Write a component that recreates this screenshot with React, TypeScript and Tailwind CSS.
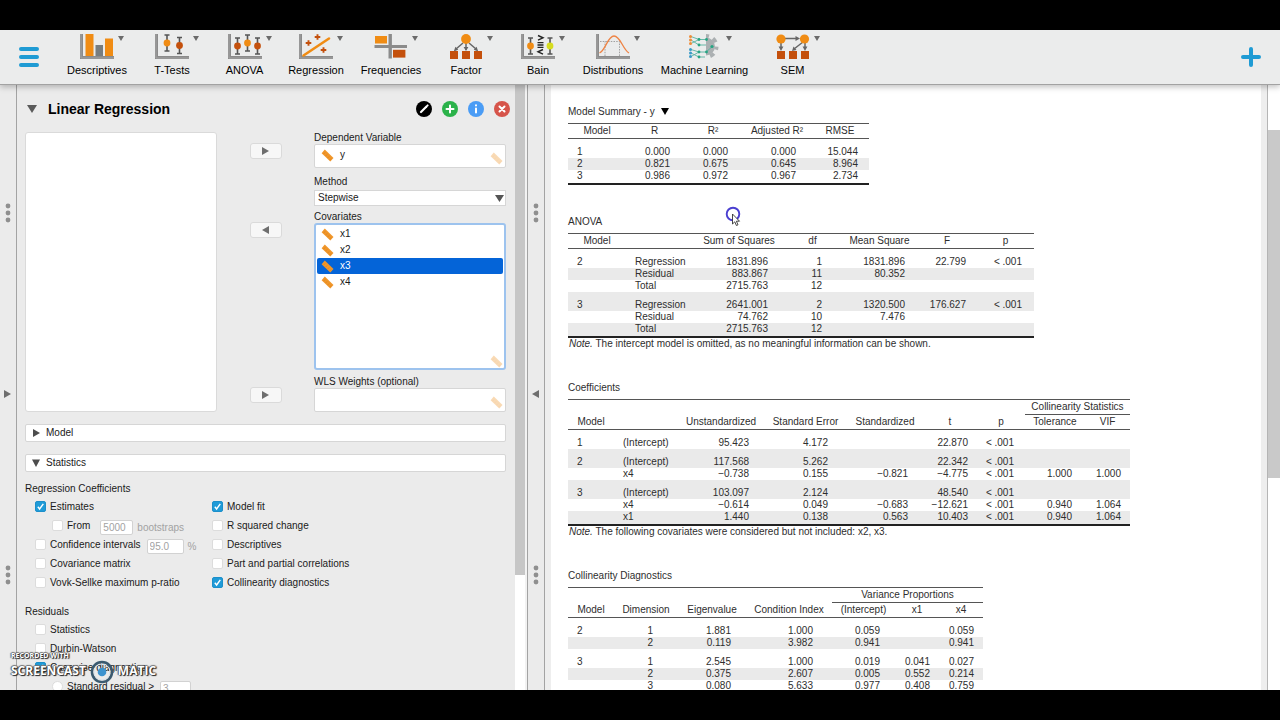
import React, { ReactNode } from "react";

const ORANGE = "#f08c14";
const RUST = "#c4500c";
const STEEL = "#8b8b8b";

function Axes() {
  return (
    <g>
      <path d="M0 0h3v22h31v3H0z" fill={STEEL} />
      <path d="M1 0v24h33" fill="none" stroke="#a3a3a3" strokeWidth="1" />
    </g>
  );
}

function Whisker({ x, y, color, reach = 8 }: { x: number; y: number; color: string; reach?: number }) {
  return (
    <g>
      <path
        d={`M${x} ${y - reach}v${reach * 2}M${x - 2.5} ${y - reach}h5M${x - 2.5} ${y + reach}h5`}
        stroke="#555"
        strokeWidth="1.6"
        fill="none"
      />
      <circle cx={x} cy={y} r="3.4" fill={color} />
    </g>
  );
}

const icons: Record<string, ReactNode> = {
  Descriptives: (
    <>
      <Axes />
      <rect x="5.5" y="0" width="8" height="22" fill={ORANGE} />
      <rect x="15.5" y="11" width="7.5" height="11" fill="#777d80" />
      <rect x="25" y="4.5" width="8" height="17.5" fill={ORANGE} />
    </>
  ),
  "T-Tests": (
    <>
      <Axes />
      <Whisker x={12} y={9} color={ORANGE} />
      <Whisker x={24.5} y={11.5} color={RUST} />
    </>
  ),
  ANOVA: (
    <>
      <Axes />
      <Whisker x={9.5} y={12} color={RUST} />
      <Whisker x={19.5} y={9} color={ORANGE} />
      <Whisker x={29.5} y={12} color={RUST} />
    </>
  ),
  Regression: (
    <>
      <Axes />
      <path d="M4.5 21.5L30 4.5" stroke={ORANGE} strokeWidth="2.6" strokeLinecap="round" />
      <path
        d="M18.5 .2v5.6M15.7 3h5.6M9.5 6.2v5.6M6.7 9h5.6M24.5 13.2v5.6M21.7 16h5.6"
        stroke={RUST}
        strokeWidth="1.9"
      />
    </>
  ),
  Frequencies: (
    <>
      <path d="M14.5 0h3.4v11H33v3H17.9v10.5h-3.4V14H.5v-3h14z" fill={STEEL} />
      <rect x="1" y="2" width="12" height="7.5" fill={ORANGE} />
      <rect x="19" y="15.8" width="12.4" height="7.8" fill={RUST} />
    </>
  ),
  Factor: (
    <>
      <path d="M17 9v7M14 9l-7 6M20 9l7 6" stroke="#666" strokeWidth="1.5" />
      <path d="M14.6 13h4.8L17 17zM9.2 15.8L4.8 17.4 6.4 12.8zM24.8 15.8l4.4 1.6-1.6-4.6z" fill="#666" />
      <circle cx="17" cy="5" r="4.9" fill={ORANGE} />
      <path d="M1 17h8v8H1zM13 17h8v8h-8zM25 17h8v8h-8z" fill={RUST} />
    </>
  ),
  Bain: (
    <>
      <Axes />
      <Whisker x={9.5} y={12} color={ORANGE} />
      <Whisker x={29} y={12} color="#d6dc1e" />
      <path
        d="M17 1.5l5 2.3-5 2.3M22 15.5l-5 2.3 5 2.3M16.5 8.6h6M16.5 11h6M16.5 13.4h6"
        fill="none"
        stroke="#222"
        strokeWidth="1.4"
      />
    </>
  ),
  Distributions: (
    <>
      <Axes />
      <path d="M4 7.5h19.5V22M9 22V7.5" fill="none" stroke="#999" strokeWidth=".9" strokeDasharray="1.5 1.2" />
      <path d="M3.5 19C10 16 11.5 2 18 2s8.5 13 15 17" fill="none" stroke="#ee8344" strokeWidth="1.3" />
    </>
  ),
  "Machine Learning": (
    <>
      <path d="M18 3.500a9 9 0 0 1 0 18z" fill="#abb0b2" />
      <path
        d="M18 2a10.500 10.500 0 0 1 0 21"
        fill="none"
        stroke="#abb0b2"
        strokeWidth="4"
        strokeDasharray="3 4.500 4.500 4.500"
      />
      <path
        d="M3 2.5l8 3M3 9.500l8-4M3 6l8 5M11 5.500h7M11 11h7M3 15.500l8 2.500M3 22.500l8-4.500M3 19l8 4M11 18h7M11 23h6M18 18l7-6"
        fill="none"
        stroke="#58b3a0"
        strokeWidth=".9"
      />
      <g fill="#ee8d3a">
        <circle cx="2.5" cy="2.5" r="1.5" />
        <circle cx="2.5" cy="6" r="1.5" />
        <circle cx="2.5" cy="9.5" r="1.5" />
      </g>
      <g fill="#3a9bc8">
        <circle cx="2.5" cy="15.5" r="1.5" />
        <circle cx="2.5" cy="19" r="1.5" />
        <circle cx="2.5" cy="22.5" r="1.5" />
      </g>
      <g fill="#26a583">
        <circle cx="11" cy="5.5" r="1.4" />
        <circle cx="11" cy="11" r="1.4" />
        <circle cx="11" cy="18" r="1.4" />
        <circle cx="11" cy="23" r="1.4" />
        <circle cx="18.5" cy="5.5" r="1.4" />
        <circle cx="18.5" cy="18" r="1.4" />
        <circle cx="24" cy="12.5" r="1.6" />
      </g>
    </>
  ),
  SEM: (
    <>
      <path d="M9 4.5h11M5 9v5M29 9v5M27 8l-9 7" stroke="#666" strokeWidth="1.5" />
      <path d="M19.5 2l4.5 2.5-4.5 2.5zM2.6 12.5h4.8L5 17zM26.6 12.5h4.8L29 17zM16 17l1.5-4.5 3 3.5z" fill="#666" />
      <circle cx="5" cy="5" r="4.6" fill={ORANGE} />
      <circle cx="28.5" cy="5" r="4.6" fill={ORANGE} />
      <path d="M1 17h8v8H1zM13 17h8v8h-8zM25 17h8v8h-8z" fill={RUST} />
    </>
  ),
};

const tools: [string, string][] = [
  ["Descriptives", "w-[76px]"],
  ["T-Tests", "w-[74px]"],
  ["ANOVA", "w-[71px]"],
  ["Regression", "w-[72px]"],
  ["Frequencies", "w-[78px]"],
  ["Factor", "w-[72px]"],
  ["Bain", "w-[72px]"],
  ["Distributions", "w-[78px]"],
  ["Machine Learning", "w-[105px]"],
  ["SEM", "w-[71px]"],
];

function Toolbar() {
  return (
    <header className="relative z-10 flex h-[55px] shrink-0 items-stretch border-b border-[#a2a2a2] bg-[#ebecec] shadow-[0_2px_6px_rgba(0,0,0,0.25)]">
      <button type="button" aria-label="Main menu" className="flex w-[59px] items-center pl-[19px]">
        <svg width="20" height="20" viewBox="0 0 20 20" stroke="#1f9bd4" strokeWidth="4" strokeLinecap="round">
          <path d="M2 2h16M2 10h16M2 18h16" />
        </svg>
      </button>
      <nav className="flex">
        {tools.map(([name, width]) => (
          <button key={name} type="button" className={`relative flex flex-col items-center pt-1 ${width}`}>
            <svg width="34" height="26" viewBox="0 0 34 26">
              {icons[name]}
            </svg>
            <svg width="6" height="5" viewBox="0 0 6 5" className="absolute left-1/2 top-1.5 ml-[21px]">
              <path d="M0 0h6L3 5z" fill="#6b6b6b" />
            </svg>
            <span className="mt-0.5 whitespace-nowrap text-[11px] leading-4 text-black">{name}</span>
          </button>
        ))}
      </nav>
      <button type="button" aria-label="Show modules" className="ml-auto flex w-10 items-center pl-px">
        <svg width="20" height="20" viewBox="0 0 20 20" stroke="#1f9bd4" strokeWidth="4" strokeLinecap="round">
          <path d="M2 10h16M10 2v16" />
        </svg>
      </button>
    </header>
  );
}

function Dots() {
  return (
    <svg width="6" height="20" viewBox="0 0 6 20" fill="#8f8f8f">
      <circle cx="3" cy="3" r="2.4" />
      <circle cx="3" cy="10" r="2.4" />
      <circle cx="3" cy="17" r="2.4" />
    </svg>
  );
}

function Arrow({ left = false, className = "" }: { left?: boolean; className?: string }) {
  return (
    <svg width="7" height="8" viewBox="0 0 7 8" className={className}>
      <path d={left ? "M7 0v8L0 4z" : "M0 0v8l7-4z"} fill="#6e6e6e" />
    </svg>
  );
}

function Splitter({ left = false }: { left?: boolean }) {
  return (
    <div className="flex w-[17px] shrink-0 flex-col items-center border-r border-[#a3a3a3] bg-[#ebebeb] pr-px pt-[118px]">
      <Dots />
      <button type="button" aria-label={left ? "Hide input panel" : "Show data panel"} className="my-[167px]">
        <Arrow left={left} />
      </button>
      <Dots />
    </div>
  );
}

function Ruler({ faded = false }: { faded?: boolean }) {
  return (
    <svg width="13" height="13" viewBox="0 0 13 13" className="shrink-0" opacity={faded ? 0.35 : 1}>
      <path d="M3.8 .5L12.500 9 9.300 12.500.6 4.200z" fill="#f0962a" />
      <path d="M3 4.600l.9-.9M5 6.600l.9-.9M7 8.600l.9-.9M9 10.600l.9-.9" fill="none" stroke="#cf7614" strokeWidth=".8" />
    </svg>
  );
}

function MoveButton({ left = false, label, className = "" }: { left?: boolean; label: string; className?: string }) {
  return (
    <button
      type="button"
      aria-label={label}
      className={`flex h-4 w-8 shrink-0 items-center justify-center rounded-[3px] border border-[#dadada] bg-[#f7f7f7] ${className}`}
    >
      <Arrow left={left} />
    </button>
  );
}

function Check({
  id,
  label,
  checked = false,
  indent = false,
  radio = false,
  children,
}: {
  id: string;
  label: string;
  checked?: boolean;
  indent?: boolean;
  radio?: boolean;
  children?: ReactNode;
}) {
  return (
    <div className={`flex h-[19px] shrink-0 items-center ${indent ? "pl-[27px]" : "pl-2.5"}`}>
      <span className="mr-1 grid">
        <input
          id={id}
          type={radio ? "radio" : "checkbox"}
          defaultChecked={checked}
          className={`col-start-1 row-start-1 size-[11px] appearance-none border border-[#dcdcdc] bg-white checked:border-[#1c8fca] checked:bg-[#1f9bd8] ${
            radio ? "rounded-full" : "rounded-[2px]"
          }`}
        />
        {checked && (
          <svg viewBox="0 0 11 11" className="pointer-events-none col-start-1 row-start-1 size-[11px]">
            <path d="M2.8 5.8L4.6 8 8.3 2.8" fill="none" stroke="#fff" strokeWidth="1.4" />
          </svg>
        )}
      </span>
      <label htmlFor={id}>{label}</label>
      {children}
    </div>
  );
}

function NumberBox({ label, value, width }: { label: string; value: string; width: string }) {
  return (
    <input
      aria-label={label}
      defaultValue={value}
      className={`mt-1 h-[15px] rounded-[2px] border border-[#d2d2d2] bg-white px-0.5 text-[#a2a2a2] ${width}`}
    />
  );
}

function SectionBar({ title, open = false }: { title: string; open?: boolean }) {
  return (
    <button
      type="button"
      aria-expanded={open}
      className="flex h-[18px] w-full shrink-0 items-center gap-1.5 rounded-[2px] border border-[#d6d6d6] bg-white pl-1.5"
    >
      <span className="flex w-2 justify-center">
        <svg width="8" height="8" viewBox="0 0 8 8" fill="#4d4d4d">
          <path d={open ? "M0 .5h8L4 8z" : "M1 0v8l7-4z"} />
        </svg>
      </span>
      {title}
    </button>
  );
}

function CircleButton({ label, color, children }: { label: string; color: string; children: ReactNode }) {
  return (
    <button type="button" aria-label={label} className="size-4">
      <svg viewBox="0 0 16 16" className="size-4" fill="none" stroke="#fff" strokeWidth="2" strokeLinecap="round">
        <circle cx="8" cy="8" r="8" fill={color} stroke="none" />
        {children}
      </svg>
    </button>
  );
}

function InputPanel() {
  return (
    <section className="flex w-[498px] shrink-0 flex-col overflow-hidden bg-[#ebebeb] pl-2 pr-[9px] text-[10px] leading-3 text-[#1a1a1a]">
      <div className="flex h-[47px] shrink-0 items-center">
        <button type="button" aria-label="Collapse analysis" className="ml-0.5 mr-[11px]">
          <svg width="10" height="8" viewBox="0 0 10 8">
            <path d="M0 0h10L5 8z" fill="#5a5a5a" />
          </svg>
        </button>
        <h1 className="text-[14px] font-bold text-black">Linear Regression</h1>
        <div className="-mr-1 ml-auto flex gap-[10px]">
          <CircleButton label="Rename" color="#000">
            <path d="M5 11l5.500-5.500" strokeWidth="2.2" />
            <path d="M11.5 4.5l.2-.2" strokeWidth="1.8" />
          </CircleButton>
          <CircleButton label="Duplicate" color="#2bb24a">
            <path d="M8 4.5v7M4.5 8h7" />
          </CircleButton>
          <CircleButton label="Information" color="#4a9cf5">
            <path d="M8 7.5v4M8 4.3v.1" />
          </CircleButton>
          <CircleButton label="Remove" color="#d6544a">
            <path d="M5.5 5.5l5 5M10.5 5.5l-5 5" />
          </CircleButton>
        </div>
      </div>

      <div className="flex shrink-0 justify-between">
        <div role="listbox" aria-label="Available variables" className="w-48 rounded-[3px] border border-[#dadada] bg-white" />
        <div className="flex flex-col pt-[11px]">
          <MoveButton label="Assign dependent variable" />
          <MoveButton left label="Remove covariate" className="mt-[63px]" />
          <MoveButton label="Assign weights" className="mt-[149px]" />
        </div>
        <div className="flex w-48 flex-col">
          <span>Dependent Variable</span>
          <div className="flex h-6 rounded-[2px] border border-[#d6d6d6] bg-white pl-1.5 pr-0.5 pt-1">
            <Ruler />
            <span className="ml-1.5 grow">y</span>
            <span className="mb-0.5 self-end">
              <Ruler faded />
            </span>
          </div>
          <label htmlFor="method" className="mt-2">
            Method
          </label>
          <div className="mt-0.5 grid items-center">
            <select
              id="method"
              defaultValue="Stepwise"
              className="col-start-1 row-start-1 h-4 appearance-none border border-[#d6d6d6] bg-white pl-[3px] leading-3"
            >
              <option>Enter</option>
              <option>Backward</option>
              <option>Forward</option>
              <option>Stepwise</option>
            </select>
            <svg
              width="9"
              height="7"
              viewBox="0 0 9 7"
              className="pointer-events-none col-start-1 row-start-1 mr-0.5 justify-self-end"
            >
              <path d="M0 0h9L4.5 7z" fill="#555" />
            </svg>
          </div>
          <span className="mt-[5px]">Covariates</span>
          <div
            role="listbox"
            aria-label="Covariates"
            className="flex h-[147px] flex-col rounded-[3px] border-2 border-[#9dc3ee] bg-white px-px pt-px"
          >
            {["x1", "x2", "x3", "x4"].map((name) => (
              <div
                key={name}
                role="option"
                aria-selected={name === "x3"}
                className={`flex h-4 shrink-0 items-center gap-1.5 rounded-[2px] pl-1 ${
                  name === "x3" ? "bg-[#0464d8] text-white" : ""
                }`}
              >
                <Ruler />
                {name}
              </div>
            ))}
            <span className="ml-auto mt-auto">
              <Ruler faded />
            </span>
          </div>
          <span className="mt-1.5">WLS Weights (optional)</span>
          <div className="flex h-6 items-end justify-end rounded-[2px] border border-[#d6d6d6] bg-white pb-0.5 pr-0.5">
            <Ruler faded />
          </div>
        </div>
      </div>

      <div className="mt-3 flex shrink-0 flex-col gap-3">
        <SectionBar title="Model" />
        <SectionBar title="Statistics" open />
      </div>

      <h2 className="mt-[11px] shrink-0">Regression Coefficients</h2>
      <div className="mt-0.5 flex shrink-0">
        <div className="w-[177px]">
          <Check id="estimates" label="Estimates" checked />
          <Check id="from" label="From" indent>
            <span className="ml-2.5 flex items-center text-[#a2a2a2]">
              <NumberBox label="Number of bootstraps" value="5000" width="w-[33px]" />
              <span className="ml-1 mt-1">bootstraps</span>
            </span>
          </Check>
          <Check id="ci" label="Confidence intervals">
            <span className="ml-1.5 flex items-center text-[#a2a2a2]">
              <NumberBox label="Confidence level" value="95.0" width="w-[37px]" />
              <span className="ml-1 mt-1">%</span>
            </span>
          </Check>
          <Check id="covariance" label="Covariance matrix" />
          <Check id="vovk" label="Vovk-Sellke maximum p-ratio" />
        </div>
        <div>
          <Check id="fit" label="Model fit" checked />
          <Check id="rchange" label="R squared change" />
          <Check id="descriptives" label="Descriptives" />
          <Check id="partial" label="Part and partial correlations" />
          <Check id="collinearity" label="Collinearity diagnostics" checked />
        </div>
      </div>

      <h2 className="mt-3.5 shrink-0">Residuals</h2>
      <div className="mt-0.5 shrink-0">
        <Check id="resstat" label="Statistics" />
        <Check id="durbin" label="Durbin-Watson" />
        <Check id="casewise" label="Casewise diagnostics" checked />
        <Check id="stdres" label="Standard residual >" indent radio>
          <span className="ml-1.5">
            <NumberBox label="Residual threshold" value="3" width="w-[31px]" />
          </span>
        </Check>
      </div>
    </section>
  );
}

type Column = { w: string; head: string; cell: string };
type Group = { span: number; label: string; cols: number };

function ResultTable({
  title,
  columns,
  rows,
  starts,
  group,
  note,
  menu = false,
}: {
  title: string;
  columns: Column[];
  rows: string[][];
  starts: number[];
  group?: Group;
  note?: string;
  menu?: boolean;
}) {
  return (
    <section>
      <h3 className="mb-[5px] flex h-3 items-center gap-1.5">
        {title}
        {menu && (
          <svg width="8" height="7" viewBox="0 0 8 7" className="mb-0.5">
            <path d="M0 0h8L4 7z" fill="#000" />
          </svg>
        )}
      </h3>
      <table aria-label={title} className="table-fixed border-separate border-spacing-0 border-b-2 border-t border-b-[#222] border-t-[#555]">
        <colgroup>
          {columns.map((c, i) => (
            <col key={i} className={c.w} />
          ))}
        </colgroup>
        <thead>
          {group && (
            <tr>
              <td colSpan={group.span} className="p-0" />
              <th colSpan={group.cols} className="h-[15px] border-b border-[#555] p-0 font-normal">
                {group.label}
              </th>
            </tr>
          )}
          <tr>
            {columns.map((c, i) => (
              <th key={i} className="h-[15px] whitespace-nowrap border-b border-[#555] p-0 text-center font-normal">
                {c.head}
              </th>
            ))}
          </tr>
        </thead>
        <tbody>
          {rows.map((row, r) => (
            <tr key={r} className={r % 2 === 1 ? "bg-[#eaeaea]" : ""}>
              {row.map((value, i) => (
                <td
                  key={i}
                  className={`whitespace-nowrap ${starts.includes(r) ? "h-[19px] pt-[7px]" : "h-3 pt-0"} ${
                    r === rows.length - 1 ? "pb-px" : "pb-0"
                  } ${columns[i].cell}`}
                >
                  {value}
                </td>
              ))}
            </tr>
          ))}
        </tbody>
      </table>
      {note && (
        <p className="h-[13px] pl-px">
          <i>Note.</i> {note}
        </p>
      )}
    </section>
  );
}

const summaryColumns: Column[] = [
  { w: "w-[58px]", head: "Model", cell: "pl-[9px]" },
  { w: "w-[57px]", head: "R", cell: "pr-[13px] text-right" },
  { w: "w-[60px]", head: "R²", cell: "pr-[15px] text-right" },
  { w: "w-[68px]", head: "Adjusted R²", cell: "pr-[15px] text-right" },
  { w: "w-[58px]", head: "RMSE", cell: "pr-[11px] text-right" },
];

const anovaColumns: Column[] = [
  { w: "w-[58px]", head: "Model", cell: "pl-[9px]" },
  { w: "w-[69px]", head: "", cell: "pl-[9px]" },
  { w: "w-[88px]", head: "Sum of Squares", cell: "pr-[15px] text-right" },
  { w: "w-[59px]", head: "df", cell: "pr-[20px] text-right" },
  { w: "w-[75px]", head: "Mean Square", cell: "pr-[12px] text-right" },
  { w: "w-[60px]", head: "F", cell: "pr-[11px] text-right" },
  { w: "w-[57px]", head: "p", cell: "pr-[12px] text-right" },
];

const coefficientColumns: Column[] = [
  { w: "w-[46px]", head: "Model", cell: "pl-[9px]" },
  { w: "w-[64px]", head: "", cell: "pl-[9px]" },
  { w: "w-[86px]", head: "Unstandardized", cell: "pr-[15px] text-right" },
  { w: "w-[83px]", head: "Standard Error", cell: "pr-[19px] text-right" },
  { w: "w-[76px]", head: "Standardized", cell: "pr-[15px] text-right" },
  { w: "w-[54px]", head: "t", cell: "pr-[9px] text-right" },
  { w: "w-[48px]", head: "p", cell: "pr-[11px] text-right" },
  { w: "w-[60px]", head: "Tolerance", cell: "pr-[13px] text-right" },
  { w: "w-[45px]", head: "VIF", cell: "pr-[9px] text-right" },
];

const diagnosticColumns: Column[] = [
  { w: "w-[46px]", head: "Model", cell: "pl-[9px]" },
  { w: "w-[64px]", head: "Dimension", cell: "pr-[25px] text-right" },
  { w: "w-[68px]", head: "Eigenvalue", cell: "pr-[15px] text-right" },
  { w: "w-[86px]", head: "Condition Index", cell: "pr-[19px] text-right" },
  { w: "w-[63px]", head: "(Intercept)", cell: "pr-[15px] text-right" },
  { w: "w-[44px]", head: "x1", cell: "pr-[9px] text-right" },
  { w: "w-[44px]", head: "x4", cell: "pr-[9px] text-right" },
];

function Results() {
  return (
    <main className="flex min-w-0 grow flex-col gap-[31px] overflow-hidden border-x-[6px] border-[#eeeeee] bg-white pl-[17px] pt-[21px] text-[10px] leading-3 text-[#2e2e2e]">
      <ResultTable
        title="Model Summary - y"
        menu
        columns={summaryColumns}
        starts={[0]}
        rows={[
          ["1", "0.000", "0.000", "0.000", "15.044"],
          ["2", "0.821", "0.675", "0.645", "8.964"],
          ["3", "0.986", "0.972", "0.967", "2.734"],
        ]}
      />
      <ResultTable
        title="ANOVA"
        columns={anovaColumns}
        starts={[0, 3]}
        note="The intercept model is omitted, as no meaningful information can be shown."
        rows={[
          ["2", "Regression", "1831.896", "1", "1831.896", "22.799", "< .001"],
          ["", "Residual", "883.867", "11", "80.352", "", ""],
          ["", "Total", "2715.763", "12", "", "", ""],
          ["3", "Regression", "2641.001", "2", "1320.500", "176.627", "< .001"],
          ["", "Residual", "74.762", "10", "7.476", "", ""],
          ["", "Total", "2715.763", "12", "", "", ""],
        ]}
      />
      <ResultTable
        title="Coefficients"
        columns={coefficientColumns}
        starts={[0, 1, 3]}
        group={{ span: 7, label: "Collinearity Statistics", cols: 2 }}
        note="The following covariates were considered but not included: x2, x3."
        rows={[
          ["1", "(Intercept)", "95.423", "4.172", "", "22.870", "< .001", "", ""],
          ["2", "(Intercept)", "117.568", "5.262", "", "22.342", "< .001", "", ""],
          ["", "x4", "−0.738", "0.155", "−0.821", "−4.775", "< .001", "1.000", "1.000"],
          ["3", "(Intercept)", "103.097", "2.124", "", "48.540", "< .001", "", ""],
          ["", "x4", "−0.614", "0.049", "−0.683", "−12.621", "< .001", "0.940", "1.064"],
          ["", "x1", "1.440", "0.138", "0.563", "10.403", "< .001", "0.940", "1.064"],
        ]}
      />
      <ResultTable
        title="Collinearity Diagnostics"
        columns={diagnosticColumns}
        starts={[0, 2]}
        group={{ span: 4, label: "Variance Proportions", cols: 3 }}
        rows={[
          ["2", "1", "1.881", "1.000", "0.059", "", "0.059"],
          ["", "2", "0.119", "3.982", "0.941", "", "0.941"],
          ["3", "1", "2.545", "1.000", "0.019", "0.041", "0.027"],
          ["", "2", "0.375", "2.607", "0.005", "0.552", "0.214"],
          ["", "3", "0.080", "5.633", "0.977", "0.408", "0.759"],
        ]}
      />
    </main>
  );
}

const outline = "[text-shadow:1px_1px_1px_#222,-1px_0_1px_#555,0_-1px_1px_#777,1px_0_1px_#333]";

function Watermark() {
  return (
    <div className={`pointer-events-none absolute bottom-0 left-[11px] z-20 font-['Open_Sans',sans-serif] font-bold text-white ${outline}`}>
      <div className="text-[7px] leading-[8px]">RECORDED WITH</div>
      <div className="flex h-[30px] items-start text-[12px] leading-[22px]">
        SCREENCAST
        <svg width="24" height="24" viewBox="0 0 24 24" className="mx-1">
          <circle cx="12" cy="12" r="10" fill="none" stroke="#3b5a70" strokeWidth="2.6" />
          <circle cx="12" cy="12" r="8" fill="none" stroke="#d9e3ea" strokeWidth="1" />
          <circle cx="12" cy="12" r="4.3" fill="#3c93cf" />
        </svg>
        MATIC
      </div>
    </div>
  );
}

export default function App() {
  return (
    <div className="flex h-screen flex-col overflow-hidden bg-black py-[30px] font-['Liberation_Sans',Arial,sans-serif]">
      <Toolbar />
      <div className="relative flex min-h-0 grow overflow-hidden bg-[#ebebeb]">
        <Splitter />
        <InputPanel />
        <div className="w-[13px] shrink-0 border-r border-[#a3a3a3] bg-[#f2f2f2] pr-0.5">
          <div className="h-full bg-white">
            <div className="h-[81%] bg-[#c6c6c6]" />
          </div>
        </div>
        <Splitter left />
        <Results />
        <div className="w-[13px] shrink-0 border-l border-[#b5b5b5] bg-white pt-[45px]">
          <div className="h-[348px] bg-[#c9c9c9]" />
        </div>
        <svg width="20" height="22" viewBox="0 0 20 22" className="pointer-events-none absolute left-[725px] top-[121px]">
          <circle cx="8" cy="8" r="6.3" fill="none" stroke="#4a3fd0" strokeWidth="1.9" />
          <path d="M7.5 8v10l2.3-2.2 1.6 3.7 1.6-.7-1.6-3.6h3.1z" fill="#fff" stroke="#333" strokeWidth=".9" />
        </svg>
        <Watermark />
      </div>
    </div>
  );
}
